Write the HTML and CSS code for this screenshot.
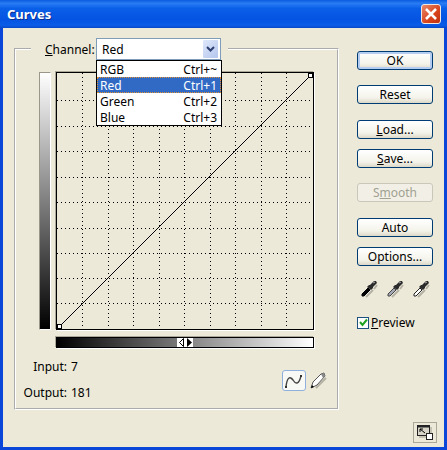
FILE: index.html
```html
<!DOCTYPE html>
<html lang="en">
<head>
    <meta charset="UTF-8">
    <title>Curves</title>
    <link rel="stylesheet" href="styles.css">
</head>
<body>
    <div class="window">
        <div class="titlebar">
            <span class="title">Curves</span>
            <span class="close-button">
                <svg width="14" height="14" viewBox="0 0 14 14"><path d="M2 2 L12 12 M12 2 L2 12" stroke="#fff" stroke-width="2.6" fill="none"/></svg>
            </span>
        </div>
        <div class="dialog">
            <fieldset class="group">
                <legend class="channel-row">
                    <span class="channel-label"><u>C</u>hannel:</span>
                    <div class="combo">
                        <span class="combo-value">Red</span>
                        <span class="combo-arrow">
                            <svg width="9" height="7" viewBox="0 0 9 7"><path d="M1 1 L4.5 4.5 L8 1" stroke="#2c3f70" stroke-width="2" fill="none"/></svg>
                        </span>
                        <ul class="combo-list">
                            <li><span>RGB</span><span>Ctrl+~</span></li>
                            <li class="selected"><span>Red</span><span>Ctrl+1</span></li>
                            <li><span>Green</span><span>Ctrl+2</span></li>
                            <li><span>Blue</span><span>Ctrl+3</span></li>
                        </ul>
                    </div>
                </legend>

                <div class="graph-row">
                    <div class="output-ramp"></div>
                    <svg class="graph" width="258" height="258" viewBox="0 0 258 258">
                        <g stroke="#000" stroke-width="1" stroke-dasharray="1 3" fill="none">
                            <path d="M26.5 1 V257 M52.5 1 V257 M77.5 1 V257 M103.5 1 V257 M128.5 1 V257 M154.5 1 V257 M179.5 1 V257 M205.5 1 V257 M230.5 1 V257"/>
                            <path d="M1 28.5 H257 M1 54.5 H257 M1 79.5 H257 M1 105.5 H257 M1 130.5 H257 M1 156.5 H257 M1 181.5 H257 M1 206.5 H257 M1 231.5 H257"/>
                        </g>
                        <path d="M3 255 L255 3" stroke="#000" stroke-width="1" fill="none"/>
                        <rect x="1.5" y="252.5" width="4" height="4" fill="#fff" stroke="#000"/>
                        <rect x="252.5" y="1.5" width="4" height="4" fill="#fff" stroke="#000"/>
                        <rect x="0.5" y="0.5" width="257" height="257" fill="none" stroke="#000"/>
                    </svg>
                </div>

                <div class="input-ramp">
                    <span class="ramp-handle">
                        <svg width="15" height="9" viewBox="0 0 15 9">
                            <path d="M5.5 0.5 L1.5 4.5 L5.5 8.5 Z" fill="#fff" stroke="#000"/>
                            <path d="M9 0 L14 4.5 L9 9 Z" fill="#000"/>
                        </svg>
                    </span>
                </div>

                <div class="readout-row">
                    <div class="readouts">
                        <span class="readout-label">Input:</span><span>7</span>
                        <span class="readout-label">Output:</span><span>181</span>
                    </div>
                    <div class="tools">
                        <span class="tool-button active">
                            <svg width="20" height="16" viewBox="0 0 20 16"><path d="M2 14 C3 4 6 3 9 7 C12 12 15 11 17 3" stroke="#444" stroke-width="1.4" fill="none"/><rect x="1" y="13" width="2" height="2" fill="#333"/><rect x="16" y="2" width="2" height="2" fill="#333"/></svg>
                        </span>
                        <svg class="pencil" width="17" height="18" viewBox="0 0 17 18">
                            <path d="M6 16 L16 6" stroke="#b5b2a5" stroke-width="2"/>
                            <path d="M1 16 L3 10 L11 2 L14 1 L15 4 L7 13 Z" fill="#fff" stroke="#555" stroke-width="1"/>
                            <path d="M11 2 L14 1 L15 4 L13 6 Z" fill="#8a8a8a"/>
                            <path d="M1 16 L2 13 L4 15 Z" fill="#000"/>
                        </svg>
                    </div>
                </div>
            </fieldset>

            <div class="side">
                <button class="btn default">OK</button>
                <button class="btn gap-s">Reset</button>
                <button class="btn gap-m"><u>L</u>oad...</button>
                <button class="btn gap-xs"><u>S</u>ave...</button>
                <button class="btn gap-s disabled">S<u>m</u>ooth</button>
                <button class="btn gap-m">Auto</button>
                <button class="btn gap-xs">Options...</button>

                <div class="droppers">
                    <svg width="17" height="18" viewBox="0 0 17 18">
                        <path d="M5 17 L12 10 M13 9 L16 5" stroke="#b5b2a5" stroke-width="2"/>
                        <path d="M1 14 L7 8 L9 10 L3 16 L1 16 Z" fill="#000" stroke="#000"/>
                        <path d="M6 7 L8 5 L9 5 L11 3 L13 1 L15 1 L16 3 L14 5 L12 7 L12 8 L10 10 Z" fill="#2a2a2a"/>
                        <path d="M12 3 L14 2" stroke="#aaa"/>
                    </svg>
                    <svg width="17" height="18" viewBox="0 0 17 18">
                        <path d="M5 17 L12 10 M13 9 L16 5" stroke="#b5b2a5" stroke-width="2"/>
                        <path d="M1 14 L7 8 L9 10 L3 16 L1 16 Z" fill="#a4a8b4" stroke="#444"/>
                        <path d="M6 7 L8 5 L9 5 L11 3 L13 1 L15 1 L16 3 L14 5 L12 7 L12 8 L10 10 Z" fill="#2a2a2a"/>
                        <path d="M12 3 L14 2" stroke="#aaa"/>
                    </svg>
                    <svg width="17" height="18" viewBox="0 0 17 18">
                        <path d="M5 17 L12 10 M13 9 L16 5" stroke="#b5b2a5" stroke-width="2"/>
                        <path d="M1 14 L7 8 L9 10 L3 16 L1 16 Z" fill="#fff" stroke="#222"/>
                        <path d="M6 7 L8 5 L9 5 L11 3 L13 1 L15 1 L16 3 L14 5 L12 7 L12 8 L10 10 Z" fill="#2a2a2a"/>
                        <path d="M12 3 L14 2" stroke="#aaa"/>
                    </svg>
                </div>

                <div class="preview">
                    <span class="checkbox">
                        <svg width="9" height="9" viewBox="0 0 9 9"><path d="M1 4 L3.5 7 L8 1.5" stroke="#21a121" stroke-width="2" fill="none"/></svg>
                    </span>
                    <span><u>P</u>review</span>
                </div>

                <div class="resize-button">
                    <svg width="19" height="17" viewBox="0 0 19 17">
                        <path d="M3 13 H15 V11 M15 3 V9" stroke="#a09d90" fill="none"/>
                        <rect x="1.5" y="1.5" width="12" height="10" fill="#d8d5c8" stroke="#222"/>
                        <rect x="1.5" y="1.5" width="12" height="2" fill="#222"/>
                        <path d="M4 5 L9 9 M4 5 H7 M4 5 V8" stroke="#000" fill="none"/>
                        <rect x="10.5" y="9.5" width="6" height="6" fill="#fff" stroke="#222"/>
                    </svg>
                </div>
            </div>
        </div>
    </div>
</body>
</html>
```

FILE: styles.css
```css
* {
    box-sizing: border-box;
}

body {
    margin: 0;
    font-family: "Noto Sans", "DejaVu Sans", sans-serif;
    font-size: 11px;
    color: #000000;
}

.window {
    width: 447px;
    height: 450px;
    display: flex;
    flex-direction: column;
    background: #0a46d8;
    padding: 0 3px 3px;
    overflow: hidden;
}

.titlebar {
    height: 28px;
    margin: 0 -3px;
    padding: 0 6px 0 7px;
    display: flex;
    align-items: center;
    justify-content: space-between;
    background: linear-gradient(to bottom, #0a5ce0 0%, #2a7cf4 12%, #0a5fe8 30%, #0553e2 70%, #0a5ce8 90%, #0a48c8 100%);
}

.title {
    font-size: 13px;
    font-weight: bold;
    color: #ffffff;
    text-shadow: 1px 1px 0 #0a2f90;
}

.close-button {
    width: 20px;
    height: 20px;
    display: flex;
    align-items: center;
    justify-content: center;
    border: 1px solid #f0e8e0;
    border-radius: 3px;
    background: linear-gradient(135deg, #e88a6c, #d8431c 60%, #c03010);
}

.dialog {
    flex: 1;
    display: flex;
    background: #ece9d8;
    padding: 10px 7px 4px 11px;
}

.group {
    width: 325px;
    height: 372px;
    margin: 0;
    padding: 0 0 0 23px;
    border: 2px groove #ffffff;
}

.channel-row {
    display: flex;
    align-items: center;
    margin-left: -8px;
    padding: 0 7px 0 14px;
    height: 22px;
}

.channel-label {
    width: 51px;
    font-size: 12px;
}

.combo {
    position: relative;
    width: 125px;
    height: 22px;
    display: flex;
    align-items: center;
    justify-content: space-between;
    padding: 0 2px 0 5px;
    background: #ffffff;
    border: 1px solid #7f9db9;
    font-size: 12px;
}

.combo-arrow {
    width: 15px;
    height: 18px;
    display: flex;
    align-items: center;
    justify-content: center;
    background: linear-gradient(135deg, #dfe8fa, #b4c6ee);
    border-radius: 1px;
}

.combo-list {
    position: absolute;
    top: 21px;
    left: -1px;
    width: 126px;
    margin: 0;
    padding: 0;
    list-style: none;
    background: #ffffff;
    border: 1px solid #000000;
    z-index: 2;
}

.combo-list li {
    height: 16px;
    display: flex;
    align-items: center;
    justify-content: space-between;
    padding: 0 4px 0 3px;
}

.combo-list .selected {
    background: #316ac5;
    color: #ffffff;
    outline: 1px dotted #e09030;
    outline-offset: -1px;
}

.graph-row {
    display: flex;
    gap: 5px;
    margin-top: 12px;
}

.output-ramp {
    width: 12px;
    height: 258px;
    background: linear-gradient(to bottom, #ffffff, #000000);
    border: 1px solid #000000;
    border-color: #9a978a #ffffff #ffffff #9a978a;
}

.graph {
    display: block;
    box-shadow: -1px -1px 0 #aca899, 1px 1px 0 #ffffff;
}

.input-ramp {
    position: relative;
    width: 258px;
    height: 11px;
    margin: 7px 0 0 17px;
    background: linear-gradient(to right, #000000, #ffffff);
    border: 1px solid #000000;
    box-shadow: -1px -1px 0 #aca899, 1px 1px 0 #ffffff;
}

.ramp-handle {
    position: absolute;
    left: 120px;
    top: 0;
    width: 16px;
    height: 9px;
    display: flex;
    align-items: center;
    justify-content: center;
    background: #ffffff;
}

.readout-row {
    display: flex;
    justify-content: space-between;
    align-items: flex-start;
    width: 288px;
    margin-top: 11px;
}

.readouts {
    display: grid;
    grid-template-columns: 45px auto;
    column-gap: 4px;
    row-gap: 10px;
    margin-left: -17px;
    font-size: 12px;
    line-height: 16px;
}

.readout-label {
    text-align: right;
}

.tools {
    display: flex;
    align-items: center;
    gap: 4px;
    margin-top: 11px;
}

.tool-button {
    width: 24px;
    height: 21px;
    display: flex;
    align-items: center;
    justify-content: center;
    background: #f8f8f4;
    border: 1px solid #8fb0dc;
    border-radius: 3px;
}

.side {
    flex: 1;
    display: flex;
    flex-direction: column;
    align-items: flex-start;
    margin-left: 18px;
    padding-top: 13px;
}

.btn {
    width: 76px;
    height: 19px;
    padding: 0;
    border: 1px solid #003c74;
    border-radius: 3px;
    background: linear-gradient(to bottom, #ffffff, #f4f3ea 70%, #dcd8c8);
    font-family: inherit;
    font-size: 12px;
    line-height: 16px;
    color: #000000;
}

.btn.default {
    box-shadow: inset 0 0 0 2px #b4cdf0;
}

.btn.disabled {
    border-color: #c9c7ba;
    color: #a1a192;
    background: #f2f0e6;
}

.gap-xs {
    margin-top: 10px;
}

.gap-s {
    margin-top: 15px;
}

.gap-m {
    margin-top: 16px;
}

.droppers {
    display: flex;
    gap: 9px;
    margin: 14px 0 0 4px;
}

.preview {
    display: flex;
    align-items: center;
    gap: 2px;
    margin-top: 16px;
    font-size: 12px;
}

.checkbox {
    width: 12px;
    height: 12px;
    display: flex;
    align-items: center;
    justify-content: center;
    background: #ffffff;
    border: 1px solid #1c5180;
}

.resize-button {
    align-self: flex-end;
    width: 24px;
    height: 21px;
    margin-top: auto;
    display: flex;
    align-items: center;
    justify-content: center;
    border: 1px solid #aca899;
}
```
